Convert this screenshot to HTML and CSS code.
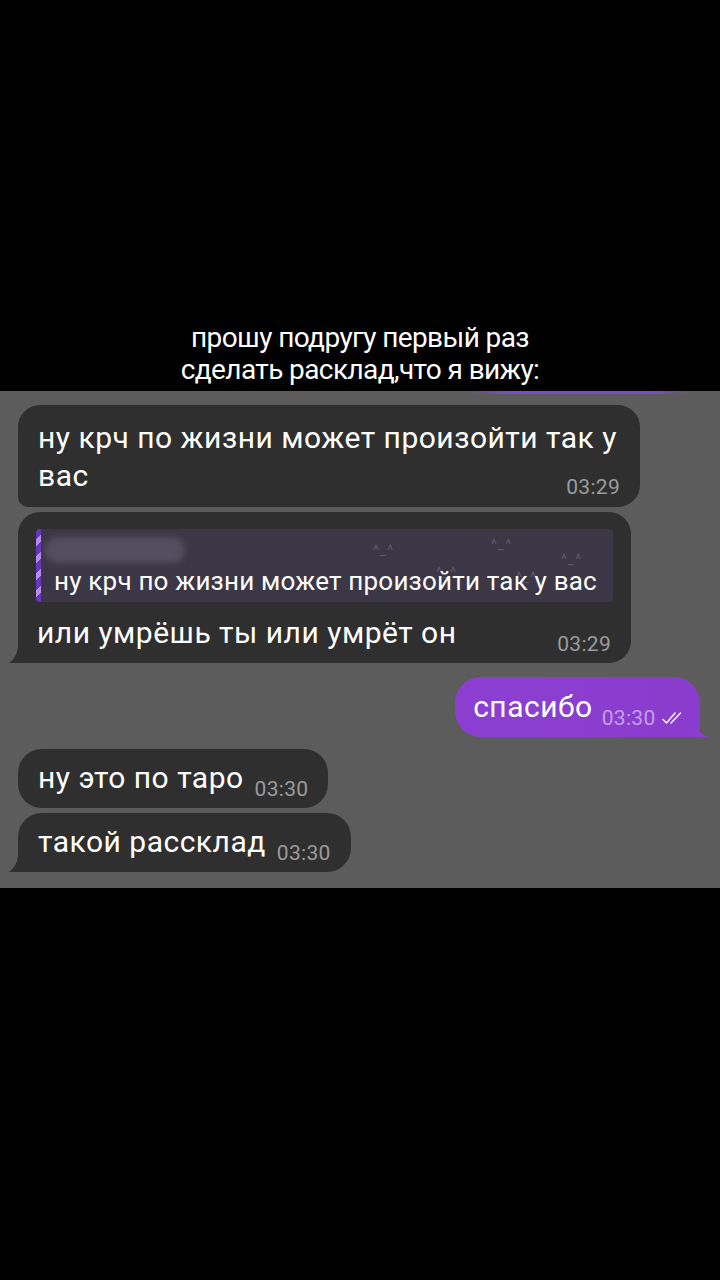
FILE: index.html
```html
<!DOCTYPE html>
<html lang="ru">
<head>
  <meta charset="UTF-8">
  <title>расклад</title>
  <link rel="stylesheet" href="styles.css">
</head>
<body>

  <div class="caption">
    <p>прошу подругу первый раз</p>
    <p>сделать расклад,что я вижу:</p>
  </div>

  <div class="chat">

    <div class="msg in first">
      ну крч по жизни может произойти так у вас<span class="time">03:29</span>
    </div>

    <div class="msg in tail">
      <div class="reply">
        <div class="reply-name"></div>
        <div class="reply-text">ну крч по жизни может произойти так у вас</div>
        <!-- котики на фоне цитаты -->
        <span class="kitty" style="left:337px;top:2px">^_^</span>
        <span class="kitty" style="left:455px;top:-4px">^_^</span>
        <span class="kitty" style="left:525px;top:11px">^_^</span>
        <span class="kitty" style="left:400px;top:24px">^_^</span>
        <span class="kitty" style="left:480px;top:29px">^_^</span>
      </div>
      <div class="body">или умрёшь ты или умрёт он<span class="time">03:29</span></div>
    </div>

    <div class="msg out tail">
      спасибо<span class="time">03:30
        <svg class="checks" width="26" height="14" viewBox="0 0 26 14">
          <path d="M1 8.5 L4.5 12 L13 2" />
          <path d="M9 12 L18.5 2" />
        </svg>
      </span>
    </div>

    <div class="msg in short">ну это по таро<span class="time">03:30</span></div>
    <div class="msg in short tail second">такой рассклад<span class="time">03:30</span></div>

  </div>

</body>
</html>
```

FILE: styles.css
```css
body { margin: 0; background: #000; font-family: Roboto, "Liberation Sans", sans-serif; width: 720px; }

.caption { padding-top: 322px; height: 391px; box-sizing: border-box; text-align: center; color: #fff; }
.caption p { margin: 0; font-size: 28px; line-height: 32px; letter-spacing: -0.6px; }

.chat {
  height: 497px; box-sizing: border-box; padding: 14px 0 0 18px;
  display: flex; flex-direction: column; align-items: flex-start;
  background: linear-gradient(90deg, transparent 470px, #7c4cc2 510px, #7c4cc2 650px, transparent 690px) top left / 100% 3px no-repeat, #5c5c5c;
}

.msg { position: relative; color: #fff; font-size: 30px; line-height: 38px; border-radius: 22px; box-sizing: border-box; letter-spacing: 0.5px; }
.msg.in { background: #2f2f2f; }
.time { font-size: 21px; line-height: 1; color: #9b9b9b; letter-spacing: 0.3px; }

/* первое сообщение: две строки, время справа внизу */
.msg.first { display: flow-root; width: 622px; padding: 14px 20px 12px 20px; border-bottom-left-radius: 10px; }
.msg.first .time { float: right; margin-top: 14px; position: relative; top: 6px; }

/* ответ с цитатой */
.msg.tail.in { border-bottom-left-radius: 6px; }
.msg.in.tail::before {
  content: ""; position: absolute; left: -9px; bottom: 0; width: 14px; height: 16px;
  background: #2f2f2f; clip-path: path("M14 0 L14 16 L0 16 Q8 10 9 0 Z");
}
.msg.out.tail::before {
  content: ""; position: absolute; right: -8px; bottom: 0; width: 14px; height: 18px;
  background: #8a3dcf; clip-path: path("M0 0 Q2 14 14 18 L0 18 Z");
}

.reply {
  position: relative; overflow: hidden; width: 577px; height: 73px; margin: 17px 18px 0 18px;
  background: #3c3746; border-radius: 4px; padding-left: 18px; box-sizing: border-box;
}
.reply::before {
  content: ""; position: absolute; left: 0; top: 0; bottom: 0; width: 5px;
  background: repeating-linear-gradient(-45deg, #6a34c0 0 7px, #b887f0 7px 12px);
}
.reply-name { width: 140px; height: 26px; margin: 8px 0 0 -9px; background: #544e60; border-radius: 13px; filter: blur(3px); }
.reply-text { position: relative; z-index: 1; font-size: 26px; line-height: 30px; margin-top: 3px; white-space: nowrap; letter-spacing: 0.2px; }
.kitty { position: absolute; font-size: 14px; color: #5e5670; letter-spacing: 1px; }

.msg .body { padding: 12px 20px 11px 19px; display: flex; align-items: baseline; justify-content: space-between; }
.msg .body .time { position: relative; top: 8px; }
.msg.tail:not(.short):not(.out) { width: 613px; margin-top: 5px; }

/* исходящее */
.msg.out {
  align-self: flex-end; margin: 14px 20px 0 0; padding: 11px 12px 11px 18px;
  background: linear-gradient(90deg, #8b3fd1, #8a3ccd); border-radius: 26px; border-bottom-right-radius: 8px;
}
.msg.out .time { color: #c49fe9; margin-left: 9px; position: relative; top: 8px; }
.checks { vertical-align: baseline; margin-left: 1px; }
.checks path { fill: none; stroke: #f4ecff; stroke-width: 1.6; stroke-linecap: round; stroke-linejoin: round; }

/* короткие сообщения */
.msg.short { margin-top: 12px; padding: 10px 20px 11px 20px; border-radius: 24px; }
.msg.short .time { margin-left: 11px; position: relative; top: 8px; }
.msg.short.second { margin-top: 5px; border-bottom-left-radius: 6px; }
```
